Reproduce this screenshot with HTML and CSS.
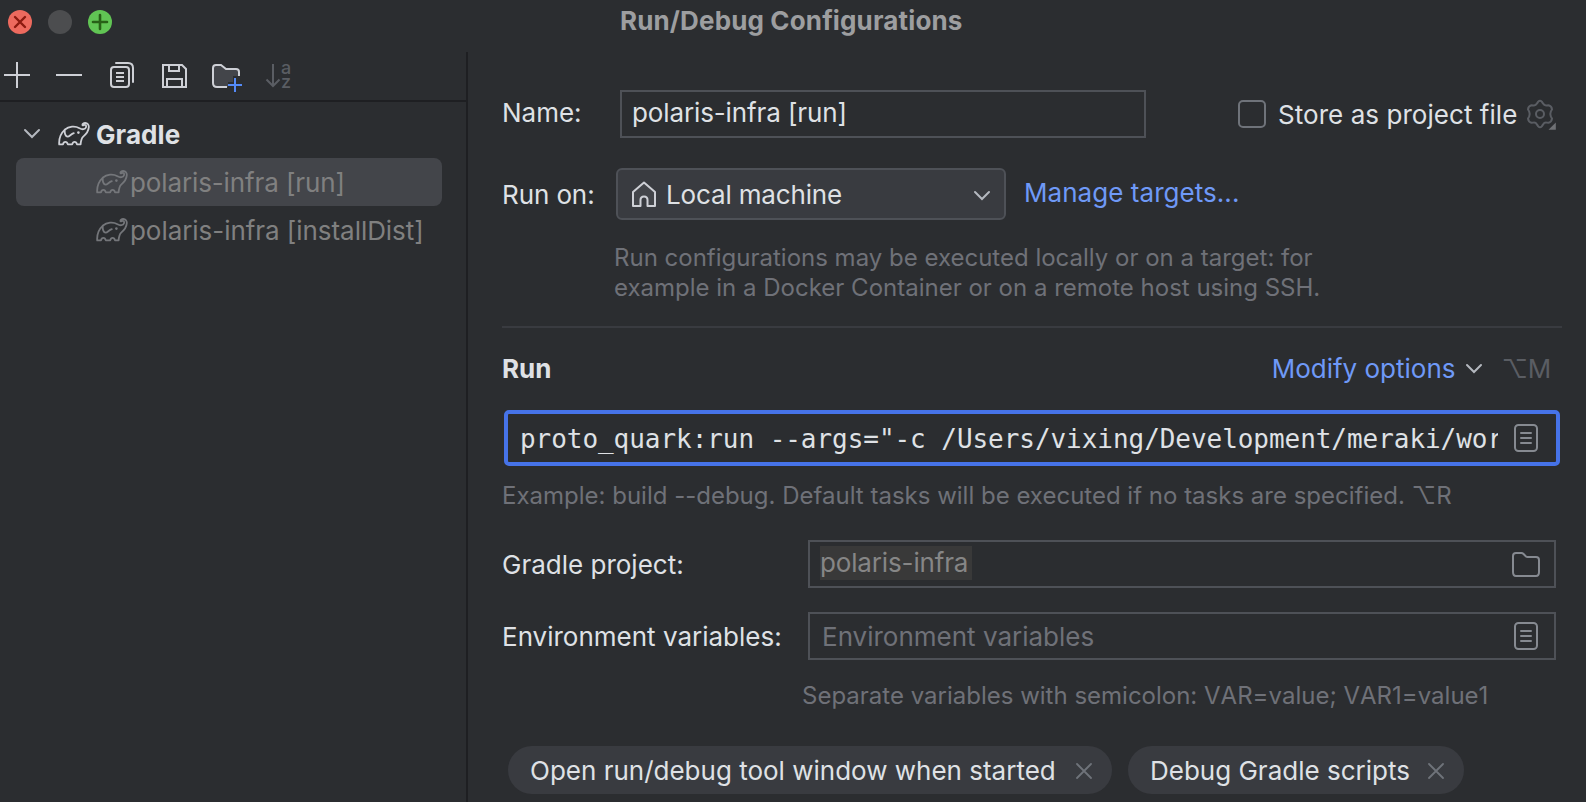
FILE: index.html
```html
<!DOCTYPE html>
<html lang="en">
<head>
<meta charset="utf-8">
<title>Run/Debug Configurations</title>
<link rel="stylesheet" href="styles.css">
</head>
<body>
<svg class="defs" width="0" height="0" aria-hidden="true">
  <symbol id="elephant" viewBox="0 0 32 24">
    <path d="M1.2 22.4C.8 16.500 2.600 11.500 6.600 7.800C11 4.200 17 3.600 21.500 6.200C24.200 7.800 27.200 7.600 28 5.200C28.500 3.700 27.800 2.700 26.600 2.800C25.700 2.900 25.300 3.500 24.600 3.400C24 2.200 25.600 1 27.200 1C29.600 1 31 2.900 30.800 5.200C30.500 9.800 28.400 12 25.200 14.600C23.400 16.200 22.900 18.500 22.600 22.400H19C18.600 20.600 17.700 19.800 16.600 19.800C15.400 19.800 14.600 20.800 14.200 22.400H9.800C9.400 20.800 8.600 19.800 7.400 19.800C6.200 19.800 5.300 20.800 5 22.400Z M6.800 8.200C6.400 11.500 7.600 14.700 9.600 14.700C11.600 14.700 12.800 12 15.800 11.200" fill="none" stroke="currentColor" stroke-width="1.800" stroke-linejoin="round" stroke-linecap="round"/>
    <circle cx="20.4" cy="10.600" r="1.300" fill="currentColor"/>
  </symbol>
  <symbol id="chevron" viewBox="0 0 18 12"><path d="M2 2L9 9L16 2" fill="none" stroke="currentColor" stroke-width="2" stroke-linecap="round"/></symbol>
  <symbol id="doc" viewBox="0 0 24 28">
    <rect x="1" y="1" width="22" height="26" rx="3.5" fill="none" stroke="currentColor" stroke-width="2"/>
    <path d="M7 9H17M7 14H17M7 19H17" stroke="currentColor" stroke-width="2" stroke-linecap="round"/>
  </symbol>
  <symbol id="cross" viewBox="0 0 16 16"><path d="M1 1L15 15M15 1L1 15" stroke="currentColor" stroke-width="1.8" stroke-linecap="round"/></symbol>
</svg>

<div class="window">
  <header class="titlebar">
    <div class="lights">
      <svg width="24" height="24" viewBox="0 0 24 24"><circle cx="12" cy="12" r="12" fill="#ed6a5e"/><path d="M7 7L17 17M17 7L7 17" stroke="#8c1a10" stroke-width="2.4" stroke-linecap="round"/></svg>
      <svg width="24" height="24" viewBox="0 0 24 24"><circle cx="12" cy="12" r="12" fill="#4c4d4f"/></svg>
      <svg width="24" height="24" viewBox="0 0 24 24"><circle cx="12" cy="12" r="12" fill="#61c554"/><path d="M12 5V19M5 12H19" stroke="#286017" stroke-width="2.6" stroke-linecap="round"/></svg>
    </div>
    <h1 class="title">Run/Debug Configurations</h1>
  </header>

  <div class="body">
    <aside class="sidebar">
      <div class="toolbar">
        <svg width="32" height="32" viewBox="0 0 32 32"><path d="M16 3V29M3 16H29" stroke="#ced0d6" stroke-width="2"/></svg>
        <svg width="32" height="32" viewBox="0 0 32 32"><path d="M3 16H29" stroke="#ced0d6" stroke-width="2"/></svg>
        <svg class="copy" width="32" height="32" viewBox="0 0 32 32" fill="none" stroke="#ced0d6" stroke-width="2"><rect x="5" y="8" width="18" height="20" rx="3"/><path d="M10 4H22Q27 4 27 9V23" stroke-linecap="round"/><path d="M10 14H18M10 18H18M10 22H18"/></svg>
        <svg width="32" height="32" viewBox="0 0 32 32" fill="none" stroke="#ced0d6" stroke-width="2"><path d="M5 6H24L28 10V28H5Z"/><path d="M11 6V12H21V6M9 28V20H24V28"/></svg>
        <svg width="32" height="34" viewBox="0 0 32 34"><path d="M18 28H7Q3 28 3 24V9Q3 6 6 6H11L16 10H26Q29 10 29 13V17H23V23H18Z" fill="#43454a"/><path d="M17 28H7Q3 28 3 24V9Q3 6 6 6H11L16 10H26Q29 10 29 13V17" fill="none" stroke="#ced0d6" stroke-width="2"/><path d="M25 19V33M18 26H32" stroke="#548af7" stroke-width="2"/></svg>
        <svg class="sort" width="32" height="32" viewBox="0 0 32 32"><path d="M11 5V27M4.500 20.500L11 27L17.500 20.500" fill="none" stroke="#5a5d63" stroke-width="2"/><text x="19" y="14.500">a</text><text x="19" y="29">z</text></svg>
      </div>
      <div class="tree">
        <div class="row group"><svg class="twisty" width="18" height="12"><use href="#chevron"/></svg><svg class="gradle" width="32" height="24"><use href="#elephant"/></svg><span>Gradle</span></div>
        <div class="row leaf selected"><svg class="gradle" width="32" height="24"><use href="#elephant"/></svg><span>polaris-infra [run]</span></div>
        <div class="row leaf wide"><svg class="gradle" width="32" height="24"><use href="#elephant"/></svg><span>polaris-infra [installDist]</span></div>
      </div>
    </aside>

    <main class="main">
      <div class="line name-line">
        <span class="label">Name:</span>
        <div class="input name-input"><span>polaris-infra [run]</span></div>
        <span class="checkbox"></span>
        <span class="store">Store as project file</span>
        <svg class="gear" width="30" height="32" viewBox="0 0 30 32" fill="none" stroke="#5a5d63" stroke-width="2"><path d="M10.900 5.600L12.200 3.600Q14 1.800 15.800 3.600L17.100 5.600Q18.200 7.600 20.400 7.400L22.600 7.300Q25.600 8 26 11.400L24.800 13.600Q23.800 16 24.800 18.400L26 20.600Q25.600 24 22.600 24.700L20.400 24.600Q18.200 24.400 17.100 26.400L15.800 28.400Q14 30.200 12.200 28.400L10.900 26.400Q9.800 24.400 7.600 24.600L5.400 24.700Q2.400 24 2 20.600L3.200 18.400Q4.200 16 3.200 13.600L2 11.400Q2.400 8 5.400 7.300L7.600 7.400Q9.800 7.600 10.900 5.600Z"/><circle cx="14" cy="16" r="4"/><path d="M29.800 24.500V31.800H22.500Z" fill="#6f7175" stroke="none"/></svg>
      </div>

      <div class="line target-line">
        <span class="label">Run on:</span>
        <div class="select">
          <svg width="24" height="26" viewBox="0 0 24 26"><path d="M1 11L12 1.500L23 11V25H15.500V19Q15.500 15.500 12 15.500Q8.500 15.500 8.500 19V25H1Z" fill="#43454a" stroke="#ced0d6" stroke-width="2" stroke-linejoin="round"/></svg>
          <span>Local machine</span>
          <svg class="caret" width="18" height="12"><use href="#chevron"/></svg>
        </div>
        <a class="link">Manage targets...</a>
      </div>

      <p class="hint target-hint">Run configurations may be executed locally or on a target: for<br>example in a Docker Container or on a remote host using SSH.</p>

      <hr class="rule">

      <div class="line run-line">
        <h2 class="section">Run</h2>
        <a class="link modify">Modify options</a>
        <svg class="caret" width="18" height="12"><use href="#chevron"/></svg>
        <span class="shortcut">⌥M</span>
      </div>

      <div class="command">
        <code>proto_quark:run --args="-c /Users/vixing/Development/meraki/wor</code>
        <svg width="24" height="28"><use href="#doc"/></svg>
      </div>

      <p class="hint example">Example: build --debug. Default tasks will be executed if no tasks are specified. ⌥R</p>

      <div class="line field-line project-line">
        <span class="label">Gradle project:</span>
        <div class="input"><span class="token">polaris-infra</span>
          <svg width="28" height="26" viewBox="0 0 28 26"><path d="M1 5Q1 2 4 2H9.500Q10.500 2 11.300 2.800L14 5.500Q14.600 6 15.500 6H24Q27 6 27 9V21Q27 25 24 25H4Q1 25 1 21Z" fill="none" stroke="#868a91" stroke-width="2"/></svg>
        </div>
      </div>

      <div class="line field-line env-line">
        <span class="label">Environment variables:</span>
        <div class="input"><span class="placeholder">Environment variables</span>
          <svg class="docicon" width="24" height="28"><use href="#doc"/></svg>
        </div>
      </div>

      <p class="hint env-hint">Separate variables with semicolon: <span class="sample">VAR=value; VAR1=value1</span></p>

      <div class="chips">
        <div class="chip chip-a"><span>Open run/debug tool window when started</span><svg width="16" height="16"><use href="#cross"/></svg></div>
        <div class="chip chip-b"><span>Debug Gradle scripts</span><svg width="16" height="16"><use href="#cross"/></svg></div>
      </div>
    </main>
  </div>
</div>
</body>
</html>
```
FILE: styles.css
```css
* { box-sizing: border-box; }
body {
  margin: 0;
  background: #2b2d30;
  color: #dfe1e5;
  font: 400 26px/32px Inter, "Liberation Sans", sans-serif;
  overflow: hidden;
}
.defs { position: absolute; }
svg { display: block; flex: none; }
span, a { white-space: nowrap; }
.window { width: 1586px; height: 802px; display: flex; flex-direction: column; overflow: hidden; }

.titlebar { height: 52px; flex: none; display: flex; align-items: flex-start; padding-left: 8px; }
.lights { display: flex; gap: 16px; padding-top: 10px; width: 611px; }
.title { margin: 0; padding: 5px 0 0 1px; font-size: 26px; font-weight: 700; letter-spacing: 0.14px; color: #9d9ea0; white-space: nowrap; }

.body { display: flex; flex: 1; min-height: 0; }
.sidebar { width: 468px; flex: none; border-right: 2px solid #1e1f22; }
.toolbar { height: 50px; border-bottom: 2px solid #1e1f22; display: flex; align-items: flex-start; gap: 20px; padding: 7px 0 0 1px; }
.copy { margin-left: 1px; }
.sort { overflow: visible; }
.sort text { font-size: 18px; font-weight: 500; fill: #5a5d63; }
.tree { padding: 8px 24px 0 16px; }
.row { height: 48px; display: flex; align-items: center; border-radius: 8px; }
.row span { padding-top: 2px; }
.group { font-weight: 700; padding-left: 7px; letter-spacing: 0.08px; }
.group .twisty { color: #b4b8bf; margin-right: 17px; }
.group .gradle { color: #ced0d6; margin-right: 6px; }
.leaf { padding-left: 80px; color: #808080; letter-spacing: -0.12px; }
.leaf.wide { letter-spacing: -0.05px; }
.leaf .gradle { color: #74767a; margin-right: 2px; }
.selected { background: #43454a; }

.main { flex: 1; min-width: 0; padding: 38px 24px 0 34px; }
.line { display: flex; align-items: center; }
.input { border: 2px solid #4e5157; height: 48px; display: flex; align-items: center; }
.link { color: #6f99f7; }
.hint { margin: 0; font-size: 24px; line-height: 30px; color: #6f7178; white-space: nowrap; }
.caret { color: #b4b8bf; }

.name-line .label { width: 118px; padding-bottom: 2px; }
.name-input { width: 526px; padding: 0 0 2px 10px; letter-spacing: -0.12px; }
.checkbox { width: 28px; height: 28px; border: 2px solid #6f737a; border-radius: 5px; margin-left: 92px; }
.store { margin-left: 12px; width: 248px; padding-top: 2px; letter-spacing: 0.05px; }

.target-line { margin-top: 30px; }
.target-line .label { width: 114px; padding-top: 2px; letter-spacing: -0.1px; }
.select { width: 390px; height: 52px; border: 2px solid #4e5157; border-radius: 6px; background: #393b40; display: flex; align-items: center; padding: 0 13px 0 14px; }
.select span { margin-left: 10px; padding-top: 2px; flex: 1; letter-spacing: -0.15px; }
.select .caret { margin-top: 3px; }
.target-line .link { margin: -3px 0 0 18px; letter-spacing: 0.05px; }
.target-hint { margin: 23px 0 0 112px; }
.rule { margin: 23px 0 0; border: 0; height: 2px; background: #393b40; }

.run-line { height: 82px; }
.section { margin: 0; font-size: 26px; font-weight: 700; flex: 1; }
.run-line .caret { margin-left: 9px; }
.shortcut { color: #5a5d63; margin: 0 11px 0 19px; letter-spacing: -0.3px; }

.command { margin: 0 0 0 2px; width: 1056px; height: 56px; border: 4px solid #4673e8; border-radius: 5px; display: flex; align-items: center; padding: 0 18px 0 12px; }
.command code { font: 400 26px/34px "DejaVu Sans Mono", monospace; letter-spacing: -0.05px; width: 978px; padding-top: 2px; white-space: pre; overflow: hidden; }
.command svg, .docicon { color: #868a91; }
.command svg { margin-left: 16px; }

.example { margin-top: 15px; }
.field-line .label { width: 306px; padding-top: 2px; }
.field-line .input { width: 748px; justify-content: space-between; }
.project-line { margin-top: 29px; }
.project-line .input { padding: 0 14px 0 10px; }
.token { background: #393939; color: #868686; height: 34px; line-height: 34px; width: 152px; margin-bottom: 2px; letter-spacing: -0.15px; }
.env-line { margin-top: 24px; }
.env-line .input { padding: 0 16px 0 12px; }
.placeholder { color: #6f7178; padding-top: 2px; }
.env-hint { margin: 21px 0 0 300px; }
.sample { font-kerning: none; }

.chips { display: flex; gap: 16px; margin: 35px 0 0 6px; }
.chip { height: 48px; border-radius: 24px; background: #393b40; display: flex; align-items: center; justify-content: space-between; padding: 0 20px 0 22px; }
.chip span { padding-top: 2px; }
.chip svg { color: #6f737a; margin-top: 2px; }
.chip-a { width: 604px; }
.chip-b { width: 336px; }
```
